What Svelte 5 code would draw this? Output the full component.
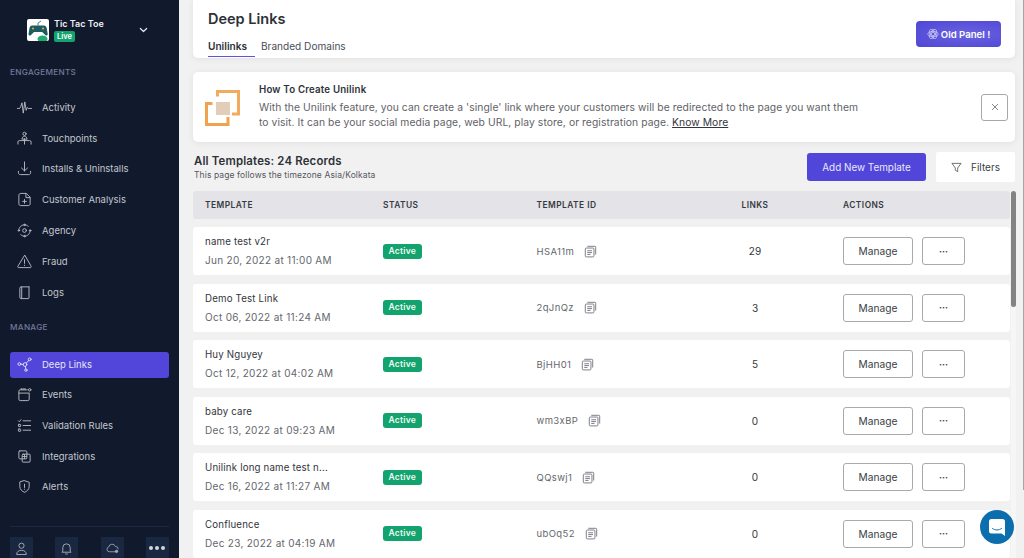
<script>
  const eng = [
    ['Activity', 'activity'], ['Touchpoints', 'touch'], ['Installs & Uninstalls', 'install'],
    ['Customer Analysis', 'customer'], ['Agency', 'agency'], ['Fraud', 'fraud'], ['Logs', 'logs']
  ];
  const man = [['Events', 'events'], ['Validation Rules', 'rules'], ['Integrations', 'integr'], ['Alerts', 'alerts']];
  const rows = [
    ['name test v2r', 'Jun 20, 2022 at 11:00 AM', 'HSA11m', 29],
    ['Demo Test Link', 'Oct 06, 2022 at 11:24 AM', '2qJnQz', 3],
    ['Huy Nguyey', 'Oct 12, 2022 at 04:02 AM', 'BjHH01', 5],
    ['baby care', 'Dec 13, 2022 at 09:23 AM', 'wm3xBP', 0],
    ['Unilink long name test n...', 'Dec 16, 2022 at 11:27 AM', 'QQswj1', 0],
    ['Confluence', 'Dec 23, 2022 at 04:19 AM', 'ubOq52', 0]
  ];
</script>

{#snippet icon(n)}
  <svg class="nav-ic" viewBox="0 0 16 16" fill="none" stroke="currentColor" stroke-width="1" stroke-linecap="round" stroke-linejoin="round">
    {#if n === 'activity'}
      <path d="M.5 9h2.300l1.200-2 1.300-4 1.400 11 1.600-12 1.500 9 1.200-3 1 1h3.500" />
    {:else if n === 'touch'}
      <circle cx="8" cy="3" r="1.700" /><path d="M5.300 8.300c.4-2 1.500-2.800 2.700-2.800s2.300.8 2.700 2.800zM1 14v-2.300c0-1 .5-1.500 1.500-1.500h11c1 0 1.500.5 1.500 1.500V14M8 8.300V14" />
    {:else if n === 'install'}
      <path d="M8 1v9.500M4.800 7.500L8 10.500l3.200-3M1.500 11v1.500c0 1.200.8 2 2 2h9c1.200 0 2-.8 2-2V11" />
    {:else if n === 'customer'}
      <path d="M9.500 1.500H4c-1.200 0-2 .8-2 2v9c0 1.200.8 2 2 2h8c1.200 0 2-.8 2-2V6zM9.500 1.500V6H14M8 8v4M6 10h4" />
    {:else if n === 'agency'}
      <circle cx="8" cy="8" r="2" /><path d="M4 3.500C5 2.500 6.500 2 8 2s3 .5 4 1.500M14 8c0 1.500-.5 3-1.500 4M4 12.500C5 13.500 6.500 14 8 14s3-.5 4-1.500M2 8c0-1.500.5-3 1.500-4" /><circle cx="8" cy="2" r=".8" /><circle cx="14" cy="8" r=".8" /><circle cx="8" cy="14" r=".8" /><circle cx="2" cy="8" r=".8" />
    {:else if n === 'fraud'}
      <path d="M8 1.500L1 13c-.5 1 0 1.500 1 1.500h12c1 0 1.500-.5 1-1.500zM8 6v4M8 12v.3" />
    {:else if n === 'logs'}
      <path d="M12.500 2H4.500C3.500 2 3 2.500 3 3.500V13c0 1 .5 1.500 1.500 1.500h7.500c.5 0 .8-.3.8-.8V2zM5 2v12.500" />
    {:else if n === 'deep'}
      <circle cx="2.500" cy="7.500" r="1.500" /><circle cx="8.500" cy="8" r="2" /><circle cx="13.500" cy="2.500" r="1.500" /><circle cx="9.500" cy="14" r="1.300" /><path d="M4 7.700L6.500 8M10 6.500l2.500-3M9 10l.3 2.700" />
    {:else if n === 'events'}
      <path d="M11 3H3.500C2.500 3 2 3.500 2 4.500v8.500C2 14 2.500 14.500 3.500 14.500h8c1 0 1.500-.5 1.500-1.500V7M2 6.500h11M4.500 1.500V3M6.500 1.500V3M8.500 1.500V3" /><circle cx="13.500" cy="3" r="1.300" />
    {:else if n === 'rules'}
      <path d="M1.500 3l1 1 1.800-2.200M6.500 3h8M6.500 8h8M6.500 13h8" /><rect x="1.500" y="6.800" width="2.400" height="2.400" rx=".5" /><rect x="1.500" y="11.800" width="2.400" height="2.400" rx=".5" />
    {:else if n === 'integr'}
      <rect x="2" y="2" width="8.500" height="8.500" rx="1" /><rect x="5.500" y="5.500" width="8.500" height="8.500" rx="1" /><path d="M8 6v4M6 8h4" />
    {:else if n === 'alerts'}
      <path d="M8 1.800l5 1.700v4.500c0 3-2.200 5-5 6.200-2.800-1.200-5-3.200-5-6.200V3.500zM8 5.500v3.500M8 10.800v.2" />
    {/if}
  </svg>
{/snippet}

{#snippet copy()}
  <svg class="copy" viewBox="0 0 12 12" fill="none" stroke="currentColor" stroke-width=".9">
    <path d="M3 1.200h7c.5 0 .8.300.8.800v6.800" /><rect x="1.200" y="2.800" width="8" height="8.200" rx="1" /><path d="M3 5.300h4.400M3 7h4.400M3 8.700h3" />
  </svg>
{/snippet}

<div class="page">
  <aside class="side">
    <div class="brand">
      <div class="logo">
        <svg viewBox="0 0 22 22" width="22" height="22">
          <rect width="22" height="22" fill="#fff" />
          <path d="M5 6.500h12c1.500 0 2.300 1 2.700 2.500l1 6c.2 1.500-1.500 2-2.500 1l-3-3H7l-3 3c-1 1-2.700.5-2.500-1l1-6C2.900 7.500 3.700 6.500 5 6.500z" fill="#1d5c63" />
          <path d="M11 6.500V4l3-2" stroke="#1d5c63" stroke-width=".8" fill="none" />
          <circle cx="6" cy="9.500" r="1" fill="#e8b04a" /><circle cx="16" cy="9.500" r="1" fill="#e8b04a" />
          <ellipse cx="15.500" cy="20" rx="5" ry="3.500" fill="#1faa72" />
        </svg>
      </div>
      <div class="brand-text">
        <div class="app-name">Tic Tac Toe</div>
        <span class="live">Live</span>
      </div>
      <svg class="chev" viewBox="0 0 10 6" fill="none" stroke="currentColor" stroke-width="1.300" stroke-linecap="round" stroke-linejoin="round"><path d="M1.500 1.300L5 4.700l3.500-3.400" /></svg>
    </div>

    <div class="sec first">ENGAGEMENTS</div>
    <nav class="nav">
      {#each eng as [label, n]}
        <div class="item">{@render icon(n)}<span>{label}</span></div>
      {/each}
    </nav>

    <div class="sec second">MANAGE</div>
    <div class="item active">{@render icon('deep')}<span>Deep Links</span></div>
    <nav class="nav after">
      {#each man as [label, n]}
        <div class="item">{@render icon(n)}<span>{label}</span></div>
      {/each}
    </nav>

    <div class="foot">
      <div class="foot-btn"><svg viewBox="0 0 14 14" fill="none" stroke="currentColor" stroke-width="1"><circle cx="7" cy="4" r="2.800" /><path d="M1.800 13.500c0-3 2-4.500 5.200-4.500s5.200 1.500 5.200 4.500z" /></svg></div>
      <div class="foot-btn"><svg viewBox="0 0 14 14" fill="none" stroke="currentColor" stroke-width="1"><path d="M3 10V6a4 4 0 0 1 8 0v4l1 1H2zM5.500 12.500c.5.700 2.500.700 3 0" /></svg></div>
      <div class="foot-btn"><svg viewBox="0 0 16 14" fill="none" stroke="currentColor" stroke-width="1"><path d="M12.500 11H4a3 3 0 0 1-.6-5.900A4.200 4.200 0 0 1 11.500 4.500 3.300 3.300 0 0 1 15 8" /><circle cx="13" cy="10.500" r="1.500" fill="currentColor" /></svg></div>
      <div class="foot-btn dots"><i></i><i></i><i></i></div>
    </div>
  </aside>

  <main class="main">
    <header class="head card">
      <div>
        <h1>Deep Links</h1>
        <div class="tabs">
          <span class="tab on">Unilinks</span>
          <span class="tab">Branded Domains</span>
        </div>
      </div>
      <button class="old">
        <svg viewBox="0 0 14 14" width="12" height="12" fill="none" stroke="#d5d3f5" stroke-width=".8"><circle cx="7" cy="7" r="2" /><ellipse cx="7" cy="7" rx="6" ry="3" /><ellipse cx="7" cy="7" rx="6" ry="3" transform="rotate(60 7 7)" /><ellipse cx="7" cy="7" rx="6" ry="3" transform="rotate(120 7 7)" /></svg>
        Old Panel !
      </button>
    </header>

    <section class="banner card">
      <svg class="ban-ic" viewBox="0 0 35 36" width="35" height="36" fill="none">
        <path d="M12.500 6.500V1.500H33.500V24H27" stroke="#f2aa5e" stroke-width="3" />
        <path d="M7.500 13.500H1.500V34.500H23V27" stroke="#f0a24e" stroke-width="3" />
        <rect x="11" y="12" width="14" height="13" fill="#e2cdb8" />
      </svg>
      <div class="ban-text">
        <h2>How To Create Unilink</h2>
        <p>With the Unilink feature, you can create a 'single' link where your customers will be redirected to the page you want them<br />to visit. It can be your social media page, web URL, play store, or registration page. <a href="#top">Know More</a></p>
      </div>
      <button class="close" aria-label="Close">
        <svg viewBox="0 0 8 8" width="8" height="8" stroke="#8a8a8a" stroke-width="1"><path d="M1 1l6 6M7 1L1 7" /></svg>
      </button>
    </section>

    <section class="tools">
      <div>
        <div class="count">All Templates: 24 Records</div>
        <div class="tz">This page follows the timezone Asia/Kolkata</div>
      </div>
      <div class="tool-btns">
        <button class="add">Add New Template</button>
        <button class="filter">
          <svg viewBox="0 0 12 12" width="11" height="11" fill="none" stroke="#555" stroke-width=".9" stroke-linejoin="round"><path d="M1 1.500h10L7.300 6.500v4L4.700 9V6.500z" /></svg>
          Filters
        </button>
      </div>
    </section>

    <div class="table">
      <div class="grid thead">
        <span>TEMPLATE</span><span>STATUS</span><span>TEMPLATE ID</span><span class="links-h">LINKS</span><span>ACTIONS</span>
      </div>
      {#each rows as r}
        <div class="grid row">
          <div class="name"><div class="t">{r[0]}</div><div class="d">{r[1]}</div></div>
          <div class="stat"><span class="badge">Active</span></div>
          <div class="tid"><span>{r[2]}</span>{@render copy()}</div>
          <div class="links">{r[3]}</div>
          <div class="acts"><button class="manage">Manage</button><button class="more">···</button></div>
        </div>
      {/each}
    </div>
    <div class="track"><div class="thumb"></div></div>
  </main>

  <div class="outer-bar"></div>
  <div class="chat">
    <svg viewBox="0 0 16 17" width="16" height="17"><path d="M2.500 0h11A2.500 2.500 0 0 1 16 2.500V17l-3.500-2.500h-10A2.500 2.500 0 0 1 0 12V2.500A2.500 2.500 0 0 1 2.500 0z" fill="#fff" /><path d="M3.500 9.500c2.500 2 6.500 2 9 0" stroke="#0d6eae" stroke-width="1" fill="none" stroke-linecap="round" /></svg>
  </div>
</div>

<style>
  :global(body) { margin: 0; }
  .page {
    width: 1024px; height: 558px; overflow: hidden; display: flex; position: relative;
    font-family: Inter, "Liberation Sans", sans-serif; background: #f1f1f1; color: #2d3138;
  }
  button { font-family: inherit; cursor: pointer; }

  .side { width: 179px; flex: none; background: #111a2c; color: #c3c6cf; display: flex; flex-direction: column; padding: 0 10px; box-sizing: border-box; }
  .brand { display: flex; align-items: center; height: 60px; padding-left: 17px; }
  .logo { width: 22px; height: 22px; border-radius: 2px; overflow: hidden; margin-right: 5px; margin-top: -1px; }
  .logo svg { display: block; }
  .brand-text { display: flex; flex-direction: column; align-items: flex-start; gap: 1px; margin-top: -1px; }
  .app-name { font-size: 9px; font-weight: 600; color: #eceef2; line-height: 12px; }
  .live { background: #13a36e; color: #fff; font-size: 7.500px; font-weight: 600; line-height: 11px; padding: 0 3px; border-radius: 2px; }
  .chev { width: 9px; height: 6px; color: #e8e9ec; margin-left: 35px; }

  .sec { font-size: 8.200px; letter-spacing: .3px; color: #75789c; font-weight: 500; line-height: 12px; }
  .first { margin-top: 6px; }
  .second { margin-top: 13px; }
  .nav { margin-top: 14px; display: flex; flex-direction: column; }
  .nav.after { margin-top: 1.600px; }
  .item { height: 30.800px; display: flex; align-items: center; padding-left: 7px; font-size: 9.500px; color: #c3c6cf; box-sizing: border-box; flex: none; }
  .nav-ic { width: 15px; height: 15px; margin-right: 10px; flex: none; color: #b7bac4; }
  .active { height: 26px; background: #5146d9; border-radius: 3px; margin-top: 19px; color: #e6e5f8; }
  .active .nav-ic { color: #dcdaf7; }

  .foot { margin-top: auto; border-top: 1px solid #1b2a44; padding-top: 10px; display: flex; justify-content: space-between; height: 21px; }
  .foot-btn { width: 23px; height: 22px; background: #1a2740; display: flex; justify-content: center; padding-top: 5px; box-sizing: border-box; color: #a9adb9; }
  .foot-btn svg { width: 13px; height: 13px; }
  .dots { gap: 2px; padding-top: 9px; }
  .dots i { width: 4px; height: 4px; background: #d4d6dc; border-radius: 50%; }

  .main { flex: 1; padding: 0 9px 0 14px; box-sizing: border-box; min-width: 0; position: relative; }
  .card { background: #fff; box-shadow: 0 1px 6px rgba(0,0,0,.07); }
  .head { height: 58px; display: flex; justify-content: space-between; border-radius: 0 0 5px 5px; padding: 0 14px 0 15px; box-sizing: border-box; }
  h1 { font-size: 14.500px; font-weight: 600; margin: 10px 0 0; line-height: 18px; color: #2d3138; }
  .tabs { display: flex; gap: 6px; margin-top: 10px; }
  .tab { font-size: 10.100px; line-height: 16px; color: #4a4e57; padding-bottom: 2px; }
  .tab.on { font-weight: 600; color: #2d3138; border-bottom: 1.500px solid #5f52dc; width: 47px; }
  .old { align-self: flex-start; margin-top: 21px; width: 85px; height: 26px; border: 0; border-radius: 4px; color: #fff; font-size: 9.600px; font-weight: 600; background: radial-gradient(ellipse at 60% 50%, #6a63df, #4f45d6); display: flex; align-items: center; justify-content: center; gap: 2px; padding: 0; }

  .banner { height: 70px; margin-top: 14px; border-radius: 5px; display: flex; padding: 0 7px 0 12px; align-items: center; box-sizing: border-box; }
  .ban-ic { margin-right: 19px; flex: none; margin-top: 1px; }
  h2 { font-size: 9.700px; font-weight: 600; margin: 0 0 3px; line-height: 14px; letter-spacing: .02em; }
  .ban-text { flex: 1; margin-top: -2px; }
  p { font-size: 10.300px; line-height: 15px; margin: 0; color: #5f6268; letter-spacing: .008em; white-space: nowrap; }
  p a { color: #33363c; text-decoration: underline; }
  .close { width: 27px; height: 27px; border: 1px solid #a8a8a8; border-radius: 3px; background: #fff; display: flex; align-items: center; justify-content: center; padding: 0; }

  .tools { display: flex; justify-content: space-between; margin-top: 10px; height: 30px; padding-left: 1px; }
  .count { font-size: 11.400px; font-weight: 600; line-height: 14px; margin-top: 2px; letter-spacing: .015em; }
  .tz { font-size: 8.500px; color: #55585f; line-height: 11px; margin-top: 2px; letter-spacing: .012em; }
  .tool-btns { display: flex; gap: 10px; }
  .add { width: 119px; height: 28px; margin-top: 1px; background: #5146d9; border: 0; border-radius: 3px; color: #eae9fb; font-size: 9.900px; padding: 0; }
  .filter { width: 79px; height: 30px; background: #fff; border: 0; border-radius: 2px; color: #3a3d44; font-size: 10px; display: flex; align-items: center; justify-content: center; gap: 9px; padding: 0; }

  .table { margin-top: 9px; width: 817px; }
  .grid { display: grid; grid-template-columns: 178px 153.500px 180px 126.500px 1fr; align-items: center; padding-left: 12px; box-sizing: border-box; }
  .thead { height: 28px; margin-bottom: -.5px; background: #e3e3e8; border-radius: 3px; font-size: 8.400px; font-weight: 600; letter-spacing: .055em; color: #373a41; }
  .row { height: 48px; margin-top: 8.500px; background: #fff; border-radius: 3px; }
  .links-h, .links { text-align: center; width: 40px; margin-left: 18.500px; }
  .t { font-size: 9.700px; line-height: 13px; color: #32353b; letter-spacing: .018em; }
  .d { font-size: 10px; line-height: 13px; margin-top: 6px; color: #64676d; letter-spacing: .03em; }
  .stat { display: flex; }
  .badge { background: #13a36e; color: #f0faf5; font-size: 8.500px; font-weight: 600; line-height: 15px; padding: 0 5.500px; border-radius: 3px; letter-spacing: .03em; }
  .tid { display: flex; align-items: center; gap: 10px; font-size: 9.500px; color: #64676d; letter-spacing: .04em; }
  .copy { width: 13px; height: 13px; color: #7a7d84; }
  .links { font-size: 10px; color: #33363c; }
  .acts { display: flex; gap: 9px; }
  .manage, .more { height: 28px; border: 1px solid #a8a9ad; border-radius: 3px; background: #fff; color: #3a3d44; padding: 0; box-sizing: border-box; }
  .manage { width: 70px; font-size: 10.200px; }
  .more { width: 43px; font-size: 9px; font-weight: 700; line-height: 1; }
  .track { position: absolute; right: 8px; top: 191px; bottom: 0; width: 5px; background: #f6f6f6; }
  .thumb { width: 5px; height: 116px; background: #838383; border-radius: 2.500px; }
  .outer-bar { position: absolute; right: 0; top: 0; width: 1.500px; height: 490px; background: #a5a5a5; }

  .chat { position: absolute; left: 980px; top: 510px; width: 34px; height: 34px; border-radius: 50%; background: #0d6eae; display: flex; align-items: center; justify-content: center; }
</style>
